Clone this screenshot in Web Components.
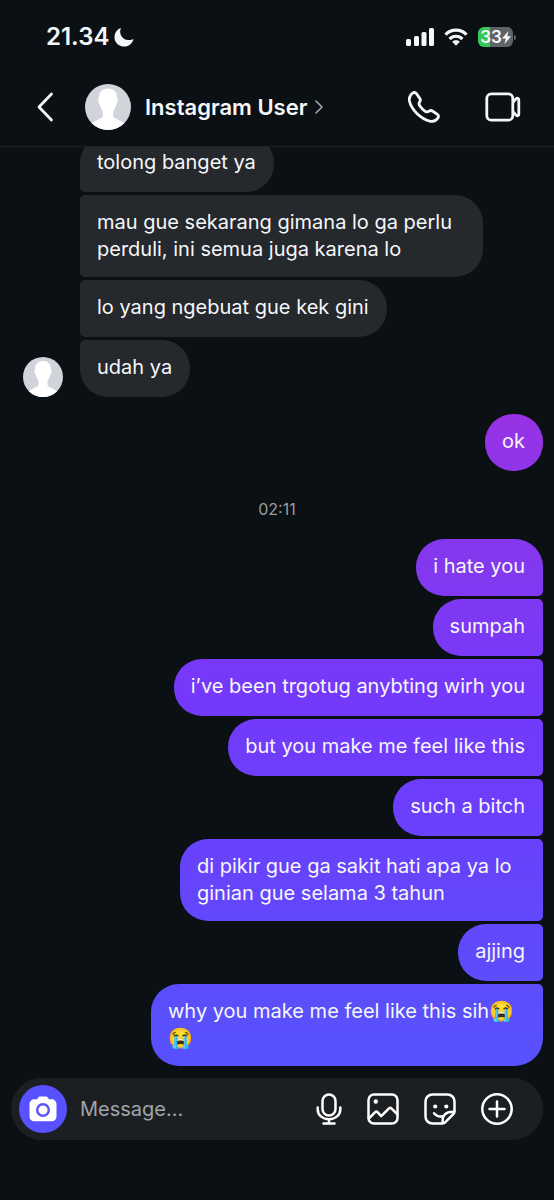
<!DOCTYPE html>
<html lang="id">
<head>
<meta charset="utf-8">
<meta name="viewport" content="width=device-width, initial-scale=1">
<title>Instagram User</title>
<style>
  html, body { margin: 0; height: 100%; background: #0b1014; }
  body { font-family: Inter, "Liberation Sans", "Noto Color Emoji", sans-serif; color: #f5f7f9; }
</style>
</head>
<body>
<chat-app>
  <status-bar slot="top" time="21.34" battery="33"></status-bar>
  <chat-header slot="top">Instagram User</chat-header>
  <message-group from="them">
    <message-bubble class="first">tolong banget ya</message-bubble>
    <message-bubble class="mid">mau gue sekarang gimana lo ga perlu perduli, ini semua juga karena lo</message-bubble>
    <message-bubble class="mid">lo yang ngebuat gue kek gini</message-bubble>
    <message-bubble class="last">udah ya</message-bubble>
  </message-group>
  <message-group from="me">
    <message-bubble class="single">ok</message-bubble>
  </message-group>
  <time-stamp>02:11</time-stamp>
  <message-group from="me">
    <message-bubble class="first">i hate you</message-bubble>
    <message-bubble class="mid">sumpah</message-bubble>
    <message-bubble class="mid">i’ve been trgotug anybting wirh you</message-bubble>
    <message-bubble class="mid">but you make me feel like this</message-bubble>
    <message-bubble class="mid">such a bitch</message-bubble>
    <message-bubble class="mid" style="--max: 363px">di pikir gue ga sakit hati apa ya lo ginian gue selama 3 tahun</message-bubble>
    <message-bubble class="mid">ajjing</message-bubble>
    <message-bubble class="last" style="--max: 392px">why you make me feel like this sih😭😭</message-bubble>
  </message-group>
  <message-composer slot="bottom"></message-composer>
</chat-app>

<script>
const define = (name, html, setup) => {
  const template = document.createElement('template');
  template.innerHTML = html;
  customElements.define(name, class extends HTMLElement {
    connectedCallback() {
      if (this.shadowRoot) return;
      const root = this.attachShadow({ mode: 'open' });
      root.append(template.content.cloneNode(true));
      if (setup) setup(this, root);
    }
  });
};

const ICONS = {
  moon: [20, 20, '<path d="M7 .8C4.600 5.800 7.500 12.800 14.300 13.100c1.800 0 3.500-.4 5.200-1.200C18.200 16.500 14.800 19.500 10.300 19.500 4.800 19.500.5 15.700.5 10.200.5 5.800 3.200 2.300 7 .8z" fill="currentColor"/>'],
  signal: [28, 18, '<g fill="currentColor"><rect x="0" y="11" width="5" height="7" rx="1.500"/><rect x="8" y="8" width="5" height="10" rx="1.500"/><rect x="15.500" y="4" width="5" height="14" rx="1.500"/><rect x="23" y="0" width="5" height="18" rx="1.500"/></g>'],
  wifi: [24, 18, '<g fill="none" stroke="currentColor" stroke-width="3.200"><path d="M1.500 6.700C7.300.7 16.700.7 22.500 6.700"/><path d="M5.600 11c3.700-3.700 9.100-3.700 12.800 0"/></g><path d="M8.200 13.700c2.200-1.900 5.400-1.900 7.600 0L12 17.700z" fill="currentColor"/>'],
  bolt: [9, 13, '<path d="M6.500 0L0 7.600h3.800L2.500 13 9 5.300H5.200z" fill="currentColor"/>'],
  back: [18, 30, '<path d="M15.500 2L3 15l12.500 13" fill="none" stroke="currentColor" stroke-width="2.800" stroke-linecap="round" stroke-linejoin="round"/>'],
  next: [8, 14, '<path d="M1 1l6 6-6 6" fill="none" stroke="#a9adb2" stroke-width="1.500" stroke-linecap="round" stroke-linejoin="round"/>'],
  phone: [32, 32, '<path d="M4.600 2.200c1.500-1 3-.6 4 .7l3.300 4.700c.8 1.200.7 2.100-.2 3.300-1 1.300-1 2.300 0 3.900 1.500 2.300 3.200 4 5.500 5.500 1.600 1 2.600.9 3.900-.1 1.200-.9 2.100-1 3.300-.2l4.700 3.100c1.500 1.100 1.700 2.500.8 3.900-1.600 2.500-4.300 3.900-7.400 3.300C12.500 28.200 3.300 18.500 1.400 9.800.9 6.800 2 3.900 4.600 2.200z" fill="none" stroke="currentColor" stroke-width="2.800" stroke-linejoin="round"/>'],
  video: [36, 30, '<g fill="none" stroke="currentColor" stroke-width="2.800" stroke-linejoin="round"><rect x="1.800" y="1.800" width="26" height="26.400" rx="4.500"/><path d="M28 10.300l3-3.400c1.100-1.200 2.800-.7 2.800.9v14.400c0 1.600-1.700 2.100-2.800.9L28 19.700"/></g>'],
  camera: [28, 26, '<path d="M9 1.800C9.700.8 10.500.4 11.500.4h5c1 0 1.800.4 2.500 1.400l.8 1.400h2.700c2.900 0 5 2.100 5 5v12.300c0 2.900-2.100 4.800-5 4.800h-17c-2.900 0-5-1.900-5-4.800V8.200c0-2.900 2.100-5 5-5h2.700z" fill="currentColor"/><circle cx="14" cy="14" r="5.800" fill="none" stroke="#5751ff" stroke-width="2.400"/>'],
  mic: [26, 32, '<g fill="none" stroke="currentColor" stroke-width="2.500" stroke-linecap="round" stroke-linejoin="round"><rect x="6.500" y="1.500" width="13" height="21" rx="6.500"/><path d="M1.700 14.500v1.700c0 5.800 4.800 10 11.300 10s11.300-4.200 11.300-10v-1.700M13 26.500V30M7.500 30.400h11"/></g>'],
  image: [32, 32, '<g fill="none" stroke="currentColor" stroke-width="2.500" stroke-linecap="round" stroke-linejoin="round"><rect x="1.500" y="1.500" width="29" height="29" rx="5.500"/><path d="M1.800 25.500l6.400-6.300c.8-.8 1.500-.8 2.300 0l3.700 3.900 7.800-7.700c.8-.8 1.600-.8 2.400 0l6 6"/></g><circle cx="8.800" cy="8.500" r="2.200" fill="currentColor"/>'],
  sticker: [32, 32, '<g fill="none" stroke="currentColor" stroke-width="2.500" stroke-linecap="round" stroke-linejoin="round"><path d="M18.500 30.500H8.500c-4 0-7-3-7-7v-15c0-4 3-7 7-7h15c4 0 7 3 7 7v10c0 1-.4 1.800-1.100 2.500l-8.300 8.400c-.7.700-1.600 1.100-2.600 1.100z"/><path d="M18.700 30c-.8-7 2.400-11.500 11.500-11.200"/><path d="M10 20.200c2.200 2.700 5 3.700 8.500 3"/></g><circle cx="11.200" cy="13.500" r="2.100" fill="currentColor"/><circle cx="22.300" cy="13.500" r="2.100" fill="currentColor"/>'],
  plus: [32, 32, '<g fill="none" stroke="currentColor" stroke-width="2.500" stroke-linecap="round"><circle cx="16" cy="16" r="14.700"/><path d="M16 8.500v15M8.500 16h15"/></g>']
};

define('ui-icon', '<style>:host { display: block; flex: none; } svg { display: block; }</style>', (el, root) => {
  const [w, h, body] = ICONS[el.getAttribute('name')];
  root.innerHTML += `<svg width="${w}" height="${h}" viewBox="0 0 ${w} ${h}" aria-hidden="true">${body}</svg>`;
});

define('user-avatar', `<style>
  :host { display: block; flex: none; width: 40px; height: 40px; border-radius: 50%; overflow: hidden; background: #d2d4dc; }
  svg { display: block; width: 100%; height: 100%; }
</style>
<svg viewBox="0 0 46 46" role="img" aria-label="Avatar"><path d="M23 4.500c-6 0-9.300 4-9.200 9.500 0 1.200-.8 1.500-.5 3.400.2 1.700.8 2.600 1.500 3 .5 3 1.500 5 3 6.800v5.300c-1 2.500-8.500 3.500-12.300 8.500L8 50h30l2.500-9c-3.800-5-11.300-6-12.300-8.500v-5.300c1.500-1.800 2.500-3.800 3-6.800.7-.4 1.300-1.300 1.500-3 .3-1.900-.5-2.200-.5-3.400C32.300 8.500 29 4.500 23 4.500z" fill="#fff"/></svg>`);

define('chat-app', `<style>
  :host { display: flex; flex-direction: column; height: 100vh; }
  main { flex: 1; min-height: 0; overflow: hidden; display: flex; flex-direction: column; justify-content: flex-end; padding-bottom: 12px; }
  footer { padding: 0 11px 60px; }
</style>
<header><slot name="top"></slot></header>
<main><slot></slot></main>
<footer><slot name="bottom"></slot></footer>`);

define('status-bar', `<style>
  :host { display: flex; align-items: center; justify-content: space-between; height: 50px; padding: 12px 38px 6px 46px; }
  div { display: flex; align-items: center; }
  .clock { gap: 5px; font-size: 24px; line-height: 28px; font-weight: 600; }
  .state { gap: 10px; }
  .battery { gap: 1px; }
  .cell { justify-content: center; width: 35px; height: 20px; border-radius: 6px; font-size: 17px; font-weight: 600; background: linear-gradient(90deg, #34c759 34%, #606468 34%); }
  .tip { width: 2px; height: 5px; border-radius: 0 2px 2px 0; background: #606468; }
</style>
<div class="clock"><span id="time"></span><ui-icon name="moon"></ui-icon></div>
<div class="state"><ui-icon name="signal"></ui-icon><ui-icon name="wifi"></ui-icon>
<div class="battery"><div class="cell"><span id="level"></span><ui-icon name="bolt"></ui-icon></div><div class="tip"></div></div></div>`,
(el, root) => {
  root.getElementById('time').textContent = el.getAttribute('time');
  root.getElementById('level').textContent = el.getAttribute('battery');
});

define('chat-header', `<style>
  :host { display: flex; align-items: center; height: 78px; padding: 0 33px 0 36px; border-bottom: 1px solid #1c2125; }
  button { display: flex; align-items: center; padding: 0; border: 0; background: none; color: inherit; font: inherit; }
  .name { flex: 1; min-width: 0; gap: 8px; margin-left: 14px; font-size: 22px; line-height: 28px; font-weight: 600; }
  user-avatar { width: 46px; height: 46px; margin-left: 31px; }
  .video { margin-left: 45px; }
</style>
<button aria-label="Kembali"><ui-icon name="back"></ui-icon></button>
<user-avatar></user-avatar>
<button class="name"><slot></slot><ui-icon name="next"></ui-icon></button>
<button aria-label="Panggilan suara"><ui-icon name="phone"></ui-icon></button>
<button class="video" aria-label="Panggilan video"><ui-icon name="video"></ui-icon></button>`);

define('message-group', `<style>
  :host { display: flex; flex: none; align-items: flex-end; gap: 17px; padding: 0 11px 0 23px; --bubble: #25282d; }
  :host([from="me"]) { justify-content: flex-end; --bubble: linear-gradient(180deg, #a62ed8 28%, #9333e8 37%, #8338ee 47%, #7439fb 58%, #6b3ffc 68%, #5a4ffb 84%, #5751ff 90%) fixed; }
  :host([from="them"]) { padding-bottom: 17px; }
  .stack { display: flex; flex-direction: column; gap: 3px; align-items: flex-start; }
  :host([from="me"]) .stack { align-items: flex-end; }
  :host([from="me"]) user-avatar { display: none; }
</style>
<user-avatar></user-avatar><div class="stack"><slot></slot></div>`,
(el) => {
  for (const bubble of el.children) bubble.setAttribute('from', el.getAttribute('from'));
});

define('message-bubble', `<style>
  :host { display: block; box-sizing: border-box; min-height: 57px; max-width: var(--max, 403px); padding: 14px 18px 14px 17px; font-size: 20px; line-height: 27px; background: var(--bubble); border-radius: 28px; }
  :host([from="them"]:is(.first, .mid)) { border-bottom-left-radius: 5px; }
  :host([from="them"]:is(.mid, .last)) { border-top-left-radius: 5px; }
  :host([from="me"]:is(.first, .mid)) { border-bottom-right-radius: 5px; }
  :host([from="me"]:is(.mid, .last)) { border-top-right-radius: 5px; }
</style><slot></slot>`);

define('time-stamp', `<style>
  :host { display: block; flex: none; padding: 28px 0 20px; text-align: center; font-size: 16px; line-height: 20px; color: #9a9da1; }
</style><slot></slot>`);

define('message-composer', `<style>
  :host { display: flex; align-items: center; gap: 25px; padding: 7px 30px 7px 8px; border-radius: 31px; background: #1c1f21; }
  button { display: flex; flex: none; align-items: center; justify-content: center; padding: 0; border: 0; background: none; color: #fff; }
  .camera { width: 48px; height: 48px; border-radius: 50%; background: #5751ff; }
  input { flex: 1; min-width: 0; margin-left: -12px; padding: 0; border: 0; outline: 0; background: none; color: #f5f7f9; font: inherit; font-size: 20px; line-height: 28px; }
  input::placeholder { color: #a1a4a8; opacity: 1; }
</style>
<button class="camera" aria-label="Kamera"><ui-icon name="camera"></ui-icon></button>
<input type="text" aria-label="Pesan" placeholder="Message...">
<button aria-label="Pesan suara"><ui-icon name="mic"></ui-icon></button>
<button aria-label="Galeri"><ui-icon name="image"></ui-icon></button>
<button aria-label="Stiker"><ui-icon name="sticker"></ui-icon></button>
<button aria-label="Lainnya"><ui-icon name="plus"></ui-icon></button>`);
</script>
</body>
</html>
